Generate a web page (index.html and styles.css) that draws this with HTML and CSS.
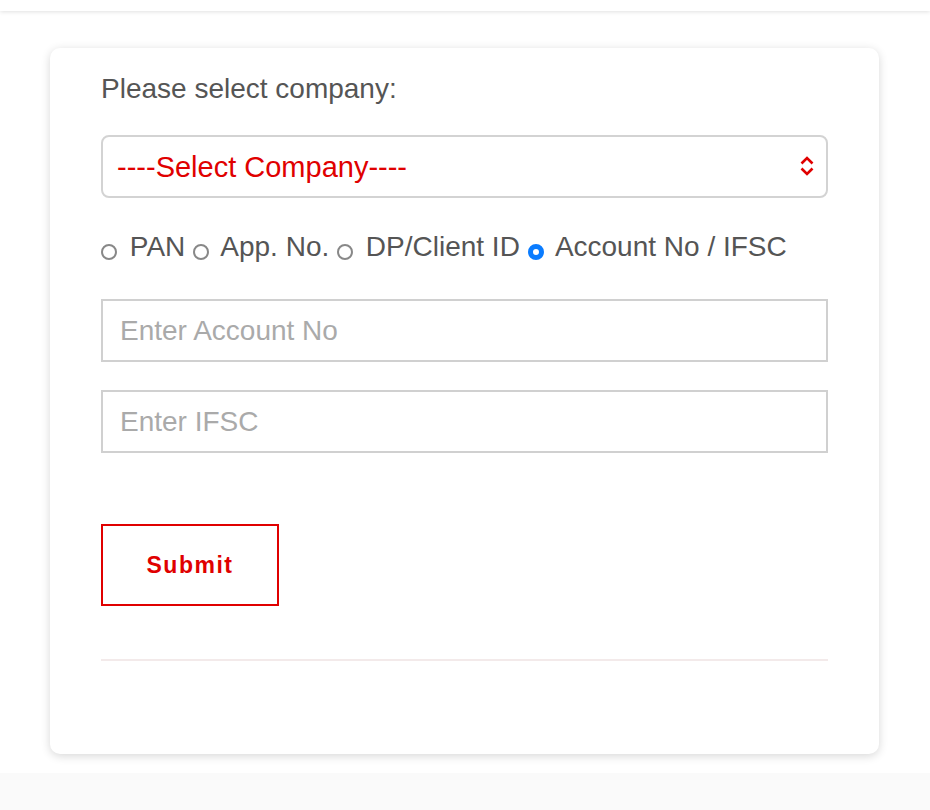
FILE: index.html
```html
<!DOCTYPE html>
<html lang="en">
<head>
<meta charset="UTF-8" />
<meta name="viewport" content="width=device-width, initial-scale=1" />
<title>IPO Allotment Status</title>
<link rel="stylesheet" href="styles.css">
</head>
<body>
  <header class="topbar"></header>

  <main class="page">
    <form class="card" onsubmit="return false;">
      <label class="field-label" for="company">Please select company:</label>

      <div class="select-wrap">
        <select id="company" class="company-select">
          <option>----Select Company----</option>
        </select>
        <svg class="select-arrows" width="14" height="22" viewBox="0 0 14 22" aria-hidden="true">
          <path d="M1.5 8.5 L7 3 L12.5 8.5" fill="none" stroke="#e00000" stroke-width="2.6" />
          <path d="M1.5 13.5 L7 19 L12.5 13.5" fill="none" stroke="#e00000" stroke-width="2.6" />
        </svg>
      </div>

      <div class="search-by">
        <label class="opt"><input type="radio" name="by" value="pan"> PAN</label>
        <label class="opt"><input type="radio" name="by" value="app"> App. No.</label>
        <label class="opt"><input type="radio" name="by" value="dp"> DP/Client ID</label>
        <label class="opt"><input type="radio" name="by" value="acc" checked> Account No / IFSC</label>
      </div>

      <input class="text-input" type="text" placeholder="Enter Account No">
      <input class="text-input" type="text" placeholder="Enter IFSC">

      <button class="submit-btn" type="submit">Submit</button>

      <hr class="divider">
    </form>
  </main>

  <footer class="bottom"></footer>
</body>
</html>
```

FILE: styles.css
```css
* {
  box-sizing: border-box;
}
body {
  margin: 0;
  background: #fff;
  font-family: "Liberation Sans", Arial, Helvetica, sans-serif;
  color: #555;
}
.topbar {
  height: 11px;
  background: #fff;
  box-shadow: 0 1px 4px rgba(0, 0, 0, 0.12);
}
.page {
  padding: 37px 51px 19px 50px;
}
.card {
  background: #fff;
  border-radius: 10px;
  box-shadow: 0 2px 10px rgba(0, 0, 0, 0.16);
  padding: 24px 51px 92px 51px;
  height: 706px;
}
.field-label {
  display: block;
  font-size: 28px;
  line-height: 34px;
  color: #555;
  margin-bottom: 29px;
}
.select-wrap {
  position: relative;
}
.company-select {
  appearance: none;
  -webkit-appearance: none;
  width: 100%;
  height: 63px;
  border: 2px solid #d3d3d3;
  border-radius: 8px;
  background: #fff;
  color: #e00000;
  font-family: inherit;
  font-size: 29px;
  padding: 0 14px;
  outline: none;
}
.select-arrows {
  position: absolute;
  right: 14px;
  top: 20px;
  pointer-events: none;
}
.search-by {
  margin: 31px 0 34px 0;
  font-size: 28px;
  line-height: 36px;
  color: #555;
}
.opt input {
  appearance: none;
  -webkit-appearance: none;
  width: 16px;
  height: 16px;
  margin: 0 5px 0 0;
  border: 2px solid #888;
  border-radius: 50%;
  vertical-align: -4px;
  background: #fff;
}
.opt input:checked {
  border: 5px solid #0a7cff;
  background: #fff;
}
.text-input {
  display: block;
  width: 100%;
  height: 63px;
  border: 2px solid #d0d0d0;
  border-radius: 0;
  padding: 0 17px;
  font-family: inherit;
  font-size: 28px;
  color: #555;
  margin-bottom: 28px;
  outline: none;
}
.text-input::placeholder {
  color: #aaa;
}
.submit-btn {
  display: block;
  width: 178px;
  height: 82px;
  margin-top: 71px;
  background: #fff;
  border: 2px solid #e00000;
  color: #e00000;
  font-family: inherit;
  font-weight: 700;
  font-size: 23px;
  letter-spacing: 1.5px;
  cursor: pointer;
}
.divider {
  border: none;
  border-top: 2px solid #f3eaea;
  margin: 53px 0 0 0;
}
.bottom {
  height: 37px;
  background: #fafafa;
}
```
